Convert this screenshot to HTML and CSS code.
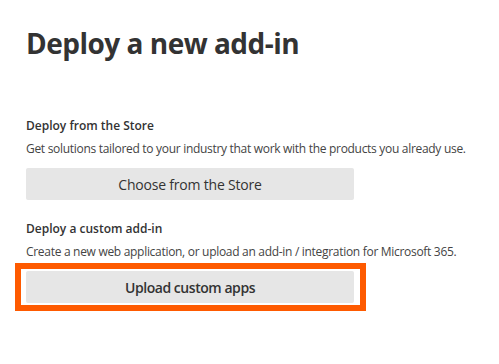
FILE: index.html
```html
<!DOCTYPE html>
<html lang="en">

<head>
    <meta charset="UTF-8">
    <meta name="viewport" content="width=device-width, initial-scale=1.0">
    <title>Deploy a new add-in</title>
    <link rel="stylesheet" href="styles.css">
</head>

<body>
    <div class="panel">
        <h1 class="panel-title">Deploy a new add-in</h1>

        <section class="deploy-section store">
            <h2 class="section-title">Deploy from the Store</h2>
            <p class="section-text">Get solutions tailored to your industry that work with the products you already use.</p>
            <button type="button" class="deploy-btn">Choose from the Store</button>
        </section>

        <section class="deploy-section custom">
            <h2 class="section-title">Deploy a custom add-in</h2>
            <p class="section-text">Create a new web application, or upload an add-in / integration for Microsoft 365.</p>
            <div class="highlight">
                <button type="button" class="deploy-btn strong">Upload custom apps</button>
            </div>
        </section>
    </div>
</body>

</html>
```

FILE: styles.css
```css
/* Basic Reset */
html,
body {
    margin: 0;
    padding: 0;
    background: #ffffff;
    color: #333333;
    font-family: 'Open Sans', 'Noto Sans', sans-serif;
}

/* Panel */
.panel {
    padding: 24px 0 0 26px;
}

.panel-title {
    margin: 0;
    font-size: 28px;
    font-weight: 700;
    line-height: 38px;
    letter-spacing: -0.5px;
    color: #333333;
}

/* Sections */
.store {
    margin-top: 55px;
}

.custom {
    margin-top: 20px;
}

.section-title {
    margin: 0;
    font-size: 12px;
    font-weight: 600;
    line-height: 18px;
    color: #333333;
}

.section-text {
    margin: 5px 0 10px;
    font-size: 12px;
    line-height: 18px;
    letter-spacing: -0.3px;
    color: #444444;
}

/* Buttons */
.deploy-btn {
    display: block;
    width: 328px;
    height: 32px;
    padding: 0;
    border: none;
    border-radius: 2px;
    background-color: #e6e6e6;
    color: #333333;
    font-family: inherit;
    font-size: 14px;
    letter-spacing: -0.2px;
    cursor: pointer;
}

.deploy-btn.strong {
    font-weight: 600;
    letter-spacing: -0.45px;
}

/* Annotation box around the upload button (collapses with the text margin) */
.highlight {
    width: fit-content;
    margin: -8px 0 0 -11px;
    padding: 2px 6px 2px 5px;
    border: 6px solid #fe5a00;
}
```
